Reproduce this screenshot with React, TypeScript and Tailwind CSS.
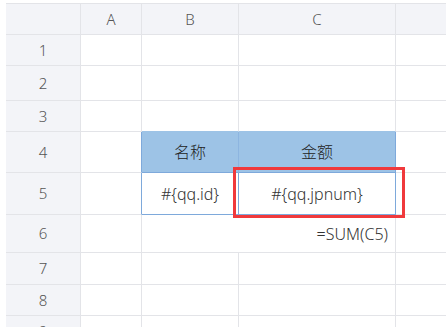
import React from "react";

const COLS = [75, 61, 97, 157, 60];
const ROWS = [31, 31, 35, 31, 41, 42, 38, 32, 31, 31];

const G = "border-[#e3e4e8]";

export default function App() {
  const font = { fontFamily: '"Noto Sans", "Noto Sans CJK SC", sans-serif' };
  const rowLabels = ["1", "2", "3", "4", "5", "6", "7", "8", "9"];
  return (
    <div className="relative w-[446px] h-[327px] overflow-hidden bg-white font-light" style={font}>
      <div className="pl-[6px] pt-[3px]">
        <div className={`border-t ${G} w-[460px]`}>
          {/* header row */}
          <div className="flex h-[31px] bg-[#f3f4f8]">
            <div className={`w-[75px] shrink-0 border-r border-b ${G}`} />
            {["A", "B", "C", "D"].map((c, i) => (
              <div
                key={c}
                className={`shrink-0 border-r border-b ${G} flex items-center justify-center text-[15px] text-[#555]`}
                style={{ width: COLS[i + 1] }}
              >
                {c !== "D" ? c : ""}
              </div>
            ))}
          </div>
          {rowLabels.map((r, ri) => {
            const h = ROWS[ri + 1];
            const rowNum = ri + 1;
            return (
              <div key={r} className="flex" style={{ height: h }}>
                <div
                  className={`w-[75px] shrink-0 bg-[#f3f4f8] border-r border-b ${G} flex items-center justify-center text-[15px] text-[#555]`}
                >
                  {r}
                </div>
                {/* A */}
                <div
                  className={`w-[61px] shrink-0 border-b ${G} border-r ${
                    rowNum === 4 || rowNum === 5 ? "!border-r-[#7ea9db]" : ""
                  }`}
                />
                {/* B */}
                {rowNum === 4 ? (
                  <div className="w-[97px] shrink-0 bg-[#9dc3e6] border-r border-b border-[#8db5e0] border-b-[#7ea9db] flex items-center justify-center text-[16px] text-[#222]">
                    名称
                  </div>
                ) : rowNum === 5 ? (
                  <div className="w-[97px] shrink-0 border-r border-b border-[#7ea9db] flex items-center justify-center text-[16px] text-[#333]">
                    {"#{qq.id}"}
                  </div>
                ) : rowNum === 6 ? (
                  <div className={`w-[97px] shrink-0 border-b ${G}`} />
                ) : (
                  <div
                    className={`w-[97px] shrink-0 border-r border-b ${G} ${
                      rowNum === 3 ? "!border-b-[#9dc3e6]" : ""
                    }`}
                  />
                )}
                {/* C */}
                {rowNum === 4 ? (
                  <div className="w-[157px] shrink-0 bg-[#9dc3e6] border-r border-b border-[#7ea9db] flex items-center justify-center text-[16px] text-[#222]">
                    金额
                  </div>
                ) : rowNum === 5 ? (
                  <div className="w-[157px] shrink-0 border-r border-b border-[#7ea9db] flex items-center justify-center text-[16px] text-[#333]">
                    {"#{qq.jpnum}"}
                  </div>
                ) : rowNum === 6 ? (
                  <div className={`w-[157px] shrink-0 border-r border-b ${G} flex items-center justify-end pr-[7px] text-[16px] text-[#333]`}>
                    =SUM(C5)
                  </div>
                ) : (
                  <div
                    className={`w-[157px] shrink-0 border-r border-b ${G} ${
                      rowNum === 3 ? "!border-b-[#9dc3e6]" : ""
                    }`}
                  />
                )}
                {/* D */}
                <div className={`w-[60px] shrink-0 border-r border-b ${G}`} />
              </div>
            );
          })}
        </div>
      </div>
      {/* red annotation box */}
      <div className="absolute left-[233px] top-[167px] w-[172px] h-[51px] border-[3px] border-[#f0393c]" />
    </div>
  );
}
